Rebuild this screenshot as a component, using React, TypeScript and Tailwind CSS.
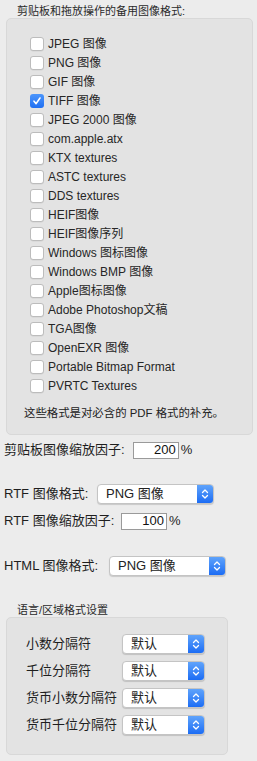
import React from 'react';

const FONT = '"Liberation Sans", "Noto Sans CJK SC", sans-serif';

const formats = [
  { label: 'JPEG 图像', checked: false },
  { label: 'PNG 图像', checked: false },
  { label: 'GIF 图像', checked: false },
  { label: 'TIFF 图像', checked: true },
  { label: 'JPEG 2000 图像', checked: false },
  { label: 'com.apple.atx', checked: false },
  { label: 'KTX textures', checked: false },
  { label: 'ASTC textures', checked: false },
  { label: 'DDS textures', checked: false },
  { label: 'HEIF图像', checked: false },
  { label: 'HEIF图像序列', checked: false },
  { label: 'Windows 图标图像', checked: false },
  { label: 'Windows BMP 图像', checked: false },
  { label: 'Apple图标图像', checked: false },
  { label: 'Adobe Photoshop文稿', checked: false },
  { label: 'TGA图像', checked: false },
  { label: 'OpenEXR 图像', checked: false },
  { label: 'Portable Bitmap Format', checked: false },
  { label: 'PVRTC Textures', checked: false },
];

function Checkbox({ checked }: { checked: boolean }) {
  if (checked) {
    return (
      <div className="w-[14px] h-[14px] rounded-[3px] bg-gradient-to-b from-[#4b95fb] to-[#1f6ff2] flex items-center justify-center shrink-0">
        <svg width="10" height="10" viewBox="0 0 10 10">
          <path d="M2 5.2 L4.1 7.6 L8 2" fill="none" stroke="white" strokeWidth="1.6" strokeLinecap="round" strokeLinejoin="round" />
        </svg>
      </div>
    );
  }
  return <div className="w-[14px] h-[14px] rounded-[3px] bg-white border border-[#bcbcbc] shadow-[0_0.5px_0.5px_rgba(0,0,0,0.08)] shrink-0" />;
}

function Popup({ value, width }: { value: string; width: string }) {
  return (
    <div className={`${width} h-[20px] flex rounded-[4px] bg-white border border-[#c4c4c4] shadow-[0_1px_1px_rgba(0,0,0,0.15)] overflow-hidden`}>
      <div className="flex-1 flex items-center pl-[8px] text-[13px] text-[#222]">{value}</div>
      <div className="w-[16px] h-full bg-gradient-to-b from-[#5fa3fb] to-[#1b6cf4] flex items-center justify-center">
        <svg width="8" height="12" viewBox="0 0 8 12">
          <path d="M1.5 4.5 L4 2 L6.5 4.5 M1.5 7.5 L4 10 L6.5 7.5" fill="none" stroke="white" strokeWidth="1.3" strokeLinecap="round" strokeLinejoin="round" />
        </svg>
      </div>
    </div>
  );
}

function NumberField({ value, width }: { value: string; width: string }) {
  return (
    <div className={`${width} h-[17px] bg-white border border-[#9a9a9a] flex items-center justify-end pr-[2px] text-[13px] text-[#111]`}>
      {value}
    </div>
  );
}

export default function App() {
  return (
    <div className="w-[257px] h-[761px] bg-[#ececec] overflow-hidden text-[#1e1e1e]" style={{ fontFamily: FONT }}>
      {/* Image formats group */}
      <div className="pt-[5px] pl-[17px] text-[11px] leading-[13px] text-[#2a2a2a]">剪贴板和拖放操作的备用图像格式:</div>
      <div className="ml-[6px] w-[247px] h-[417px] rounded-[5px] bg-[#e3e3e3] border border-[#d8d8d8] pt-[15px] pl-[23px]">
        {formats.map((f) => (
          <div key={f.label} className="h-[19px] flex items-center gap-[4px]">
            <Checkbox checked={f.checked} />
            <span className="text-[12px] text-[#262626] whitespace-nowrap">{f.label}</span>
          </div>
        ))}
        <div className="mt-[11px] -ml-[6px] text-[11.4px] leading-[14px] text-[#222] whitespace-nowrap">这些格式是对必含的 PDF 格式的补充。</div>
      </div>

      {/* Clipboard scale */}
      <div className="mt-[5px] ml-[4px] h-[20px] flex items-center text-[13px]">
        <span>剪贴板图像缩放因子:</span>
        <div className="ml-[8px]">
          <NumberField value="200" width="w-[46px]" />
        </div>
        <span className="ml-[2px]">%</span>
      </div>

      {/* RTF format */}
      <div className="mt-[24px] ml-[4px] h-[20px] flex items-center text-[13px]">
        <span className="w-[93px]">RTF 图像格式:</span>
        <Popup value="PNG 图像" width="w-[117px]" />
      </div>

      <div className="mt-[7px] ml-[4px] h-[20px] flex items-center text-[13px]">
        <span className="w-[117px]">RTF 图像缩放因子:</span>
        <NumberField value="100" width="w-[46px]" />
        <span className="ml-[2px]">%</span>
      </div>

      {/* HTML format */}
      <div className="mt-[25px] ml-[4px] h-[20px] flex items-center text-[13px]">
        <span className="w-[105px]">HTML 图像格式:</span>
        <Popup value="PNG 图像" width="w-[117px]" />
      </div>

      {/* Locale group */}
      <div className="mt-[27px] pl-[17px] text-[11px] leading-[14px] text-[#2a2a2a]">语言/区域格式设置</div>
      <div className="ml-[6px] w-[222px] h-[138px] rounded-[5px] bg-[#e3e3e3] border border-[#d8d8d8] pt-[16px] pl-[19px] flex flex-col gap-[7px]">
        {['小数分隔符', '千位分隔符', '货币小数分隔符', '货币千位分隔符'].map((l) => (
          <div key={l} className="h-[20px] flex items-center text-[13px]">
            <span className="w-[96px]">{l}</span>
            <Popup value="默认" width="w-[83px]" />
          </div>
        ))}
      </div>
    </div>
  );
}
